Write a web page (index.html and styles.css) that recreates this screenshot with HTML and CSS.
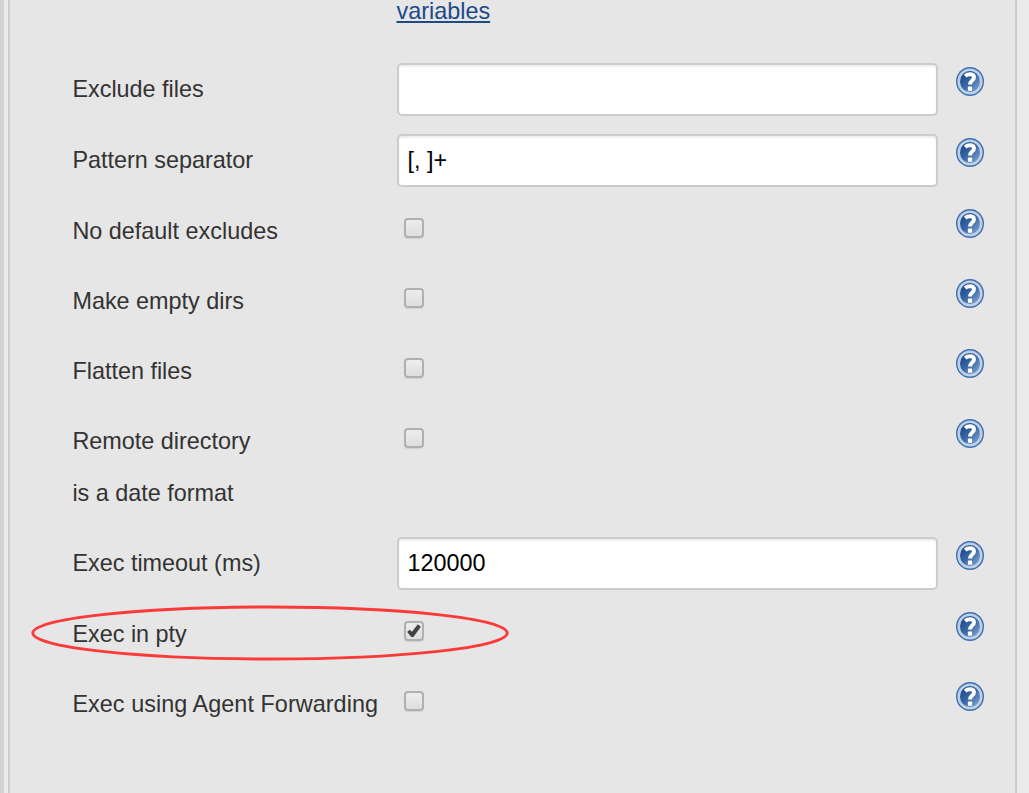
FILE: index.html
```
<!DOCTYPE html>
<html lang="en">
<head>
<meta charset="utf-8">
<title>Transfer settings</title>
<link rel="stylesheet" href="styles.css">
</head>
<body>
<svg class="defs" width="0" height="0">
  <defs>
    <linearGradient id="blue" x1="0" y1="0" x2="1" y2="1">
      <stop offset="0.15" stop-color="#1c4889"/><stop offset="0.5" stop-color="#3a67a5"/><stop offset="0.9" stop-color="#83a6ce"/>
    </linearGradient>
    <symbol id="help" viewBox="0 0 28 29">
      <ellipse cx="14" cy="14.5" rx="14" ry="14.5" fill="#3f6ead"/>
      <ellipse cx="14" cy="14.5" rx="11.3" ry="11.8" fill="url(#blue)" stroke="#bdd0e7" stroke-width="2.6"/>
      <path d="M9.2 9.1C11.7 6.6 18 6.3 18 10.4C18 13.4 14 13.6 14 17.6" fill="none" stroke="#fff" stroke-width="3.9"/>
      <rect x="11.9" y="19.4" width="4.2" height="4.3" rx=".6" fill="#fff"/>
    </symbol>
  </defs>
</svg>
<div class="outer">
<main class="panel">
  <div class="intro"><a class="link" href="#">variables</a></div>
  <div class="row tall"><label class="label">Exclude files</label><input class="text" type="text"><svg class="help"><use href="#help"/></svg></div>
  <div class="row tall"><label class="label">Pattern separator</label><input class="text" type="text" value="[, ]+"><svg class="help"><use href="#help"/></svg></div>
  <div class="row"><label class="label">No default excludes</label><span class="check"></span><svg class="help"><use href="#help"/></svg></div>
  <div class="row"><label class="label">Make empty dirs</label><span class="check"></span><svg class="help"><use href="#help"/></svg></div>
  <div class="row"><label class="label">Flatten files</label><span class="check"></span><svg class="help"><use href="#help"/></svg></div>
  <div class="row double"><label class="label">Remote directory<br>is a date format</label><span class="check"></span><svg class="help"><use href="#help"/></svg></div>
  <div class="row tall"><label class="label">Exec timeout (ms)</label><input class="text" type="text" value="120000"><svg class="help"><use href="#help"/></svg></div>
  <div class="row"><label class="label">Exec in pty</label><span class="check"><svg class="tick" viewBox="0 0 16 16"><path d="M1.2 9L3.6 6.7L6 8.8L11.8 1.2L14.9 3.7L7.4 14H5.3Z" fill="#424242"/></svg></span><svg class="help"><use href="#help"/></svg></div>
  <div class="row"><label class="label last">Exec using Agent Forwarding</label><span class="check"></span><svg class="help"><use href="#help"/></svg></div>
</main>
</div>
<svg class="mark" viewBox="0 0 480 56"><ellipse cx="240" cy="28" rx="237.2" ry="26" fill="none" stroke="#fb3a39" stroke-width="2.9"/></svg>
</body>
</html>
```
FILE: styles.css
```
* { box-sizing: border-box; }
body {
  margin: 0;
  height: 793px;
  overflow: hidden;
  background: #ebebeb;
  font: 23.4px/52px "Liberation Sans", Arial, sans-serif;
  color: #333;
}
.defs { position: absolute; }
.outer { height: 793px; padding: 0 12px 0 4px; border-left: 4px solid #d3d3d3; }
.panel {
  height: 793px;
  padding-left: 63px;
  background: #e6e6e6;
  border-left: 2px solid #ccc;
  border-right: 2px solid #ccc;
}
.intro { display: flow-root; height: 54px; padding-left: 323.5px; }
.link {
  display: block;
  margin-top: -15px;
  color: #204a87;
  text-decoration: underline;
  text-decoration-thickness: 2px;
  text-underline-offset: 2px;
}
.row {
  display: grid;
  grid-template-columns: 324px 559px 28px;
  align-items: start;
  height: 70px;
  padding-top: 9px;
}
.tall { height: 71px; }
.double { height: 122px; }
.label { margin-left: -0.6px; white-space: nowrap; }
.last { letter-spacing: 0.05px; }
.text {
  width: 541px;
  height: 53px;
  padding: 0 8.4px;
  border: 2px solid #ccc;
  border-radius: 5px;
  background: #fff;
  box-shadow: inset 0 2px 2px #eee;
  font: inherit;
  color: #000;
}
.check {
  display: block;
  width: 20px;
  height: 20px;
  margin: 13px 0 0 7px;
  border: 2px solid #b0b0b0;
  border-radius: 4px;
  background: linear-gradient(#ededed, #dedede);
  box-shadow: 0 1px 1px #d2d2d2;
}
.tick { display: block; width: 16px; height: 16px; }
.help { width: 28px; height: 29px; margin-top: 4px; }
.mark { position: absolute; left: 30px; top: 605px; width: 480px; height: 56px; }
```
